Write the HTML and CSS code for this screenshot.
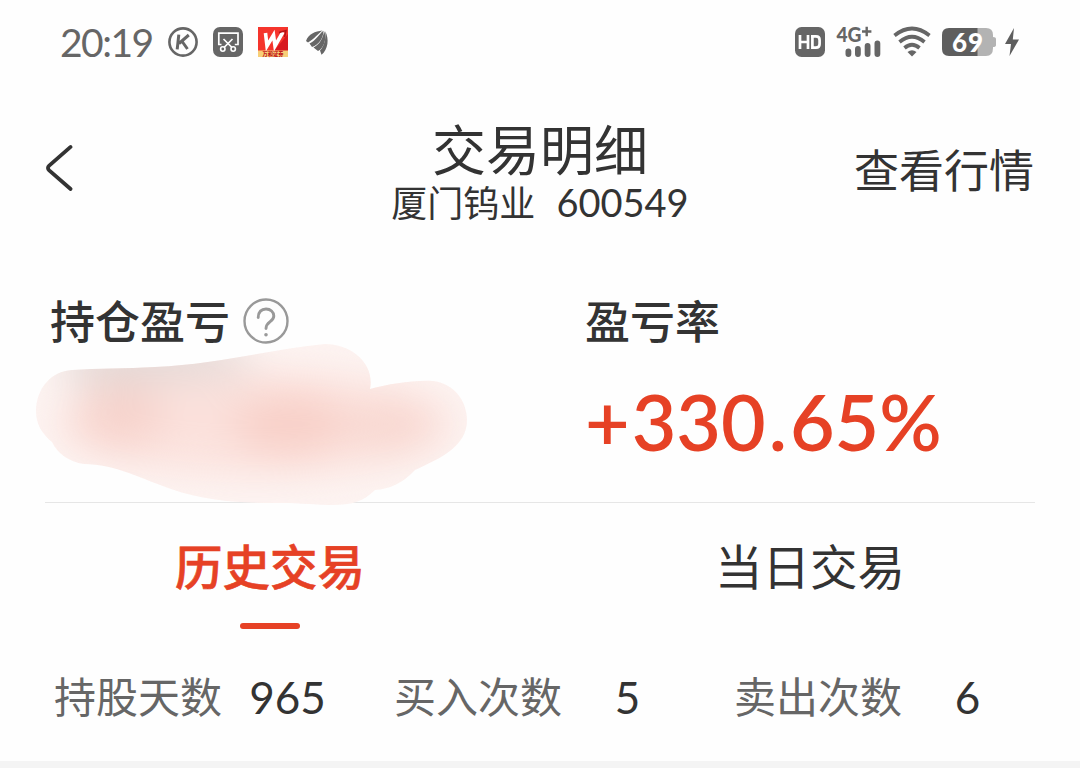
FILE: index.html
```html
<!DOCTYPE html>
<html lang="zh-CN">
<head>
    <meta charset="UTF-8">
    <meta name="viewport" content="width=device-width, initial-scale=1.0">
    <title>交易明细</title>
    <link rel="stylesheet" href="styles.css">
</head>
<body>
    <div class="status-bar">
        <div class="status-left">
            <span class="time">20:19</span>
            <svg class="icon-k" width="30" height="30" viewBox="0 0 30 30">
                <circle cx="15" cy="15" r="13.6" fill="none" stroke="#666" stroke-width="2.6"/>
                <path d="M10.8 7.7 9.2 22.3M20.8 8 11 16.5M13.8 14 19.5 22" fill="none" stroke="#666" stroke-width="3"/>
            </svg>
            <svg width="30" height="30" viewBox="0 0 30 30">
                <rect width="30" height="30" rx="7" fill="#666"/>
                <path d="M8.5 17.5H5.8V6.2H25V17.5H21.8M10.5 12 19 20.5M19.5 12 11 20.5" fill="none" stroke="#fff" stroke-width="1.7"/>
                <circle cx="9.8" cy="22" r="2.2" fill="none" stroke="#fff" stroke-width="1.6"/>
                <circle cx="20.2" cy="22" r="2.2" fill="none" stroke="#fff" stroke-width="1.6"/>
            </svg>
            <svg width="30" height="30" viewBox="0 0 30 30">
                <rect width="30" height="30" fill="#f5342c"/>
                <path d="M16 24 30 7V24z" fill="#d81920"/>
                <rect y="23.5" width="30" height="6.5" fill="#f7cf78"/>
                <path d="M7.5 6 9 19 15.5 8 17 19 25 5" fill="none" stroke="#fff" stroke-width="3.6"/>
                <path d="M21 5.5 28 3.5 26.5 10" fill="none" stroke="#b3151a" stroke-width="1.5"/>
                <text x="15" y="29.2" text-anchor="middle" class="app-name">万和证券</text>
            </svg>
            <svg class="icon-wing" width="24" height="28" viewBox="0 0 24 28">
                <path d="M0 13C2.5 6 9 3.3 16.5 2.5 12 5.5 8.5 11 2 14.5z" fill="#666"/>
                <path d="M3.5 15.5C10 12.5 13 6 17.5 2.8 17.3 10 13 17 6 19z" fill="#666"/>
                <path d="M7.5 19.5C14.5 16 17 9 18.2 3.2 21 10.5 18 20 12 23z" fill="#666"/>
                <path d="M14 22.5C18.5 18 20 10 19.2 3.2 23.5 11 22 21.5 15.5 26.8z" fill="#666"/>
            </svg>
        </div>
        <div class="status-right">
            <svg width="30" height="30" viewBox="0 0 30 30">
                <rect width="30" height="30" rx="6.5" fill="#666"/>
                <path d="M5 8V22M13 8V22M5 15H13M17.4 9.4V20.6H21Q24.6 20.6 24.6 17V13Q24.6 9.4 21 9.4H16" fill="none" stroke="#fff" stroke-width="2.7"/>
            </svg>
            <svg class="icon-signal" width="46" height="32" viewBox="0 0 46 32">
                <text x="-0.5" y="15.5" class="net-type" textLength="25" lengthAdjust="spacingAndGlyphs">4G</text>
                <path d="M25 5.5H34.4M29.7 0.8V10.2" stroke="#666" stroke-width="2.4"/>
                <path d="M11.4 25.3V28M20.9 23V28M30.6 20V28M40.4 17.5V28" stroke="#666" stroke-width="5.8" stroke-linecap="round"/>
            </svg>
            <svg class="icon-wifi" width="38" height="30" viewBox="0 0 38 30">
                <path d="M1.5 8.5Q19-5.5 36.5 8.5M6.5 15Q19 4.5 31.5 15M11.5 21Q19 14.5 26.5 21" fill="none" stroke="#666" stroke-width="3.7"/>
                <path d="M14.5 25Q19 21.5 23.5 25L19 29.5z" fill="#666"/>
            </svg>
            <svg class="icon-battery" width="54" height="28" viewBox="0 0 54 28">
                <path d="M35 0H44Q51 0 51 7V9Q54 9 54 11V17Q54 19 51 19V20Q51 28 44 28H35z" fill="#b3b3b3"/>
                <path d="M7 0H35.5V28H7Q0 28 0 21V7Q0 0 7 0z" fill="#5e5e5e"/>
                <text x="10" y="24" class="battery-level" textLength="31">69</text>
            </svg>
            <svg class="icon-bolt" width="14" height="28" viewBox="0 0 14 28">
                <path d="M9 0 0 16H6L4.5 28 14 11.5H7.8z" fill="#5e5e5e"/>
            </svg>
        </div>
    </div>

    <header class="nav">
        <svg class="back" width="28" height="48" viewBox="0 0 28 48">
            <path d="M24.6 2.9 3.2 21.6Q0.7 24 3.2 26.4L24.6 45" fill="none" stroke="#333" stroke-width="3.8" stroke-linecap="round"/>
        </svg>
        <div class="nav-title">
            <h1>交易明细</h1>
            <p>厦门钨业<span class="code">600549</span></p>
        </div>
        <a class="quote-link">查看行情</a>
    </header>

    <section class="summary">
        <div class="summary-item">
            <div class="label">
                <span>持仓盈亏</span>
                <svg width="46" height="46" viewBox="0 0 46 46">
                    <circle cx="23" cy="23" r="21.5" fill="none" stroke="#999" stroke-width="2.4"/>
                    <path d="M15.2 19.5C15.2 13.8 18.5 11 23 11S30.8 14 30.8 18C30.8 24 23 23.5 23 30.5" fill="none" stroke="#999" stroke-width="2.9" stroke-linecap="round"/>
                    <circle cx="23" cy="36.7" r="1.8" fill="#999"/>
                </svg>
            </div>
            <!-- 盈亏金额遮挡 -->
            <svg class="smudge" width="434" height="164" viewBox="34 343 434 164">
                <defs>
                    <clipPath id="shape">
                        <path d="M36 411C36 389 51 371 72 370C98 368 125 369 155 367C220 364 272 349 325 344C352 344 375 364 370 389C390 384 412 380 433 381C453 383 467 400 467 420C467 447 439 459 415 470C403 483 390 489 375 490C363 502 351 505 333 505C316 505 300 503 280 503C244 503 208 502 171 489C142 479 115 464 84 464C69 462 57 453 52 442C42 434 36 424 36 411z"/>
                    </clipPath>
                    <filter id="soft" filterUnits="userSpaceOnUse" x="-60" y="240" width="620" height="370" color-interpolation-filters="sRGB">
                        <feGaussianBlur stdDeviation="20"/>
                    </filter>
                </defs>
                <g clip-path="url(#shape)">
                    <rect x="34" y="343" width="434" height="164" fill="#fdf4f2"/>
                    <g filter="url(#soft)">
                        <ellipse cx="155" cy="364" rx="95" ry="32" fill="#e3d9d7"/>
                        <ellipse cx="255" cy="424" rx="200" ry="50" fill="#fbe1dc"/>
                        <ellipse cx="120" cy="415" rx="42" ry="34" fill="#f7d3cc"/>
                        <ellipse cx="290" cy="424" rx="56" ry="32" fill="#f8d0c8"/>
                        <ellipse cx="392" cy="426" rx="42" ry="28" fill="#f8d7d0"/>
                    </g>
                </g>
            </svg>
        </div>
        <div class="summary-item">
            <div class="label"><span>盈亏率</span></div>
            <div class="rate"><span class="sign">+</span>330<span class="dot">.</span>65%</div>
        </div>
    </section>

    <nav class="tabs">
        <a class="tab active">历史交易</a>
        <a class="tab">当日交易</a>
    </nav>

    <section class="stats">
        <div class="stat">持股天数<span class="num">965</span></div>
        <div class="stat">买入次数<span class="num">5</span></div>
        <div class="stat">卖出次数<span class="num">6</span></div>
    </section>
    <div class="divider"></div>
</body>
</html>
```
FILE: styles.css
```css
* {
    box-sizing: border-box;
}
body {
    margin: 0;
    height: 768px;
    overflow: hidden;
    background-color: #fefefe;
    color: #333;
    font-family: Lato, "Noto Sans CJK SC", sans-serif;
    display: flex;
    flex-direction: column;
}
svg {
    display: block;
    flex: none;
    overflow: visible;
}
.status-bar {
    height: 84px;
    padding: 0 61px 0 60px;
    display: flex;
    justify-content: space-between;
    align-items: center;
}
.status-left,
.status-right {
    display: flex;
    align-items: center;
}
.status-left {
    gap: 15px;
}
.time {
    width: 93px;
    font-size: 39px;
    line-height: 46px;
    letter-spacing: -1.5px;
    color: #666;
    white-space: nowrap;
}
.app-name {
    font-family: "Noto Sans CJK SC", sans-serif;
    font-size: 5.2px;
    font-weight: 900;
    fill: #c2181c;
}
.icon-wing {
    margin-left: 3px;
}
.net-type {
    font-family: Lato, sans-serif;
    font-size: 21px;
    font-weight: 900;
    fill: #666;
}
.battery-level {
    font-family: Lato, sans-serif;
    font-size: 26px;
    font-weight: 900;
    fill: #fff;
}
.icon-signal {
    margin-left: 12px;
}
.icon-wifi {
    margin-left: 10px;
}
.icon-battery {
    margin-left: 11px;
}
.icon-bolt {
    margin-left: 9px;
}

.nav {
    height: 168px;
    padding: 0 46px;
    display: grid;
    grid-template-columns: 1fr auto 1fr;
    align-items: center;
}
.nav-title {
    padding-top: 9px;
    text-align: center;
}
.nav-title h1 {
    margin: 0;
    font-size: 54px;
    line-height: 60px;
    font-weight: 400;
}
.nav-title p {
    margin: 0;
    font-size: 36px;
    line-height: 42px;
}
.code {
    margin-left: 21px;
    font-size: 38px;
}
.quote-link {
    justify-self: end;
    padding-top: 5px;
    font-size: 45px;
    line-height: 54px;
}

.summary {
    height: 251px;
    margin: 0 45px;
    padding: 40px 5px 0;
    border-bottom: 1px solid #e6e6e6;
    display: grid;
    grid-template-columns: 535px 1fr;
}
.summary-item {
    position: relative;
}
.label {
    height: 58px;
    display: flex;
    align-items: center;
    gap: 13px;
    font-size: 45px;
    font-weight: 500;
}
.label span {
    padding-bottom: 4px;
}
.smudge {
    position: absolute;
    left: -16px;
    top: 51px;
}
.rate {
    margin-top: 25px;
    font-size: 77px;
    line-height: 92px;
    font-weight: 600;
    color: #e64125;
}
.sign {
    margin-right: 2px;
}
.dot {
    margin: 0 3px 0 3px;
}

.tabs {
    height: 127px;
    display: grid;
    grid-template-columns: 1fr 1fr;
}
.tab {
    display: flex;
    flex-direction: column;
    align-items: center;
    padding-top: 34px;
    font-size: 47.5px;
    line-height: 60px;
}
.tab.active {
    color: #e64125;
    font-weight: 500;
    -webkit-text-stroke: 0.6px #e64125;
}
.tab.active::after {
    content: "";
    width: 60px;
    height: 6px;
    margin-top: 26px;
    border-radius: 3px;
    background-color: #e64125;
}

.stats {
    height: 131px;
    padding: 34px 0 0 54px;
    display: grid;
    grid-template-columns: 340px 340px 1fr;
}
.stat {
    display: flex;
    height: 60px;
    align-items: center;
    font-size: 42px;
    color: #666;
}
.num {
    width: 131px;
    padding-top: 6px;
    text-align: center;
    font-size: 44px;
    color: #333;
}
.divider {
    flex: 1;
    background-color: #f4f4f4;
}
```
